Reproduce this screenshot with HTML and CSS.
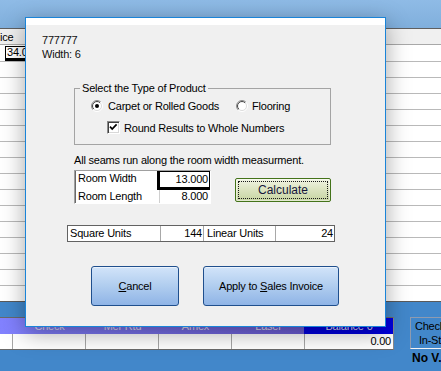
FILE: index.html
```html
<!DOCTYPE html>
<html>
<head>
<meta charset="utf-8">
<link rel="stylesheet" href="styles.css">
</head>
<body>
<div class="app">
  <div class="topbar"></div>
  <div class="grid">
    <div class="grid-head"><span class="hcell">ice</span></div>
    <div class="grid-row"><span class="fcell">34.00</span></div>
    <div class="grid-row"></div>
    <div class="grid-row"></div>
    <div class="grid-row"></div>
    <div class="grid-row"></div>
    <div class="grid-row"></div>
    <div class="grid-row"></div>
    <div class="grid-row"></div>
    <div class="grid-row"></div>
    <div class="grid-row"></div>
    <div class="grid-row"></div>
    <div class="grid-row"></div>
    <div class="grid-row"></div>
    <div class="grid-row"></div>
    <div class="grid-row"></div>
    <div class="grid-row"></div>
  </div>
  <div class="pay">
    <div class="pay-table">
      <div class="pay-head">
        <div class="ph"></div>
        <div class="ph">Check</div>
        <div class="ph">Mer Rtd</div>
        <div class="ph">Amex</div>
        <div class="ph">Laser</div>
        <div class="ph ph-bal">Balance 0</div>
      </div>
      <div class="pay-row">
        <div class="pc"></div>
        <div class="pc"></div>
        <div class="pc"></div>
        <div class="pc"></div>
        <div class="pc"></div>
        <div class="pc pc-last">0.00</div>
      </div>
    </div>
    <div class="side">
      <div class="side-box">Check<br>In-St</div>
      <div class="side-note">No V.</div>
    </div>
  </div>
</div>

<div class="dialog">
  <div class="dlg-title"></div>
  <div class="dlg-body">
    <div class="info">777777<br>Width: 6</div>

    <fieldset class="group">
      <legend class="group-legend">Select the Type of Product</legend>
      <div class="opt-row radios">
        <div class="opt opt-first">
          <svg class="radio" width="12" height="12" viewBox="0 0 12 12">
            <defs>
              <linearGradient id="ro" x1="0" y1="0" x2="1" y2="1"><stop offset="0.5" stop-color="#8a8a8a"/><stop offset="0.5" stop-color="#ffffff"/></linearGradient>
              <linearGradient id="ri" x1="0" y1="0" x2="1" y2="1"><stop offset="0.5" stop-color="#404040"/><stop offset="0.5" stop-color="#dcdcdc"/></linearGradient>
            </defs>
            <circle cx="6" cy="6" r="5.5" fill="none" stroke="url(#ro)"/>
            <circle cx="6" cy="6" r="4.5" fill="#fff" stroke="url(#ri)"/>
            <circle cx="6" cy="6" r="2" fill="#000"/>
          </svg>
          <span class="opt-label">Carpet or Rolled Goods</span>
        </div>
        <div class="opt">
          <svg class="radio" width="12" height="12" viewBox="0 0 12 12">
            <circle cx="6" cy="6" r="5.5" fill="none" stroke="url(#ro)"/>
            <circle cx="6" cy="6" r="4.5" fill="#fff" stroke="url(#ri)"/>
          </svg>
          <span class="opt-label opt-label2">Flooring</span>
        </div>
      </div>
      <div class="opt-row checks">
        <span class="chk">
          <svg width="11" height="11" viewBox="0 0 11 11"><path d="M2 4.6 L4.2 7 L8.6 2.4" fill="none" stroke="#000" stroke-width="1.7"/></svg>
        </span>
        <span class="chk-label">Round Results to Whole Numbers</span>
      </div>
    </fieldset>

    <div class="seams">All seams run along the room width measurment.</div>

    <div class="calc-row">
      <div class="dims">
        <div class="dim-row dim-row1">
          <div class="dim-label">Room Width</div>
          <div class="dim-val dim-focus">13.000</div>
        </div>
        <div class="dim-row dim-row2">
          <div class="dim-label">Room Length</div>
          <div class="dim-val">8.000</div>
        </div>
      </div>
      <div class="calc"><span class="calc-inner">Calculate</span></div>
    </div>

    <div class="results">
      <div class="rc rc1">Square Units</div>
      <div class="rc rc2">144</div>
      <div class="rc rc3">Linear Units</div>
      <div class="rc rc4">24</div>
    </div>

    <div class="actions">
      <div class="btn btn-cancel"><span><u>C</u>ancel</span></div>
      <div class="btn btn-apply"><span>Apply to <u>S</u>ales Invoice</span></div>
    </div>
  </div>
</div>
</body>
</html>
```

FILE: styles.css
```css
* { box-sizing: border-box; }
html, body { margin: 0; padding: 0; }
body {
  width: 441px;
  height: 371px;
  overflow: hidden;
  position: relative;
  font-family: "Liberation Sans", Arial, sans-serif;
  font-size: 11px;
  letter-spacing: -0.2px;
  color: #000;
  background: #4287ca;
}

/* ---------- background application ---------- */
.app { display: flex; flex-direction: column; height: 371px; }
.topbar { height: 28px; background: linear-gradient(#8fbbe6, #80afdc); flex: none; }
.grid { background: #fff; border-top: 1px solid #5f5f5f; flex: none; }
.grid-head {
  height: 16px;
  background: #f0f0f0;
  border-bottom: 1px solid #a8a8a8;
  padding-top: 1px;
  line-height: 15px;
}
.hcell { display: block; padding-left: 0; }
.grid-row { height: 16px; border-bottom: 1px solid #b9b9b9; }
.grid-row:last-child { border-bottom-color: #5a5a5a; }
.fcell {
  display: block;
  width: 70px;
  margin-left: 5px;
  margin-top: 1px;
  height: 15px;
  border-top: 1px solid #000;
  border-left: 1px solid #000;
  border-bottom: 3px solid #000;
  padding-left: 1px;
  line-height: 11px;
  font-size: 11px;
}

.pay { flex: 1; display: flex; align-items: flex-start; padding-top: 15px; }
.pay-table {
  width: 395px;
  margin-left: -1px;
  border: 1px solid #6a6a6a;
  border-right-color: #8a8a8a;
  background: #fff;
  flex: none;
}
.pay-head, .pay-row {
  display: grid;
  grid-template-columns: 13px 73px 73px 73px 73px 88px;
}
.pay-head {
  height: 16px;
  background: linear-gradient(to right, #8282ff 0, #6c5cd4 304px, #0000e0 304px);
}
.ph {
  line-height: 16px;
  text-align: center;
  color: #dcdcf4;
  white-space: nowrap;
  overflow: hidden;
}
.ph-bal { background: #0000e0; }
.pay-row { height: 15px; }
.pc { border-right: 1px solid #a6a6a6; line-height: 15px; }
.pc-last { border-right: 0; text-align: right; padding-right: 2px; }

.side { margin-left: 16px; flex: none; }
.side-box {
  width: 40px;
  height: 32px;
  border: 1px solid #8e9bb0;
  border-bottom-color: #f4f4f4;
  text-align: center;
  line-height: 14px;
  padding-top: 1px;
  color: #000;
  white-space: nowrap;
}
.side-note {
  margin-top: 2px;
  font-weight: bold;
  font-size: 12px;
  line-height: 14px;
  white-space: nowrap;
  padding-left: 2px;
  letter-spacing: 0;
}

/* ---------- dialog window ---------- */
.dialog {
  position: absolute;
  left: 25px;
  top: 17px;
  width: 361px;
  height: 310px;
  border: 1px solid #1a84d8;
  background: #f0f0f0;
  box-shadow: 0 6px 22px rgba(0, 0, 0, 0.35);
  display: flex;
  flex-direction: column;
}
.dlg-title { height: 7px; background: #fff; flex: none; }
.dlg-body { flex: 1; display: flex; flex-direction: column; align-items: flex-start; }

.info { margin: 8px 0 0 16px; line-height: 14px; color: #111; }

.group {
  margin: 20px 0 0 48px;
  width: 257px;
  border: 1px solid #a4a4a4;
  padding: 0 5px 10px 5px;
  min-width: 0;
}
.group-legend { padding: 0 2px; line-height: 14px; }

.opt-row { display: flex; align-items: center; height: 13px; }
.radios { margin-top: 4px; padding-left: 11px; }
.opt { display: flex; align-items: center; }
.opt-first { width: 145px; }
.radio { display: block; flex: none; }
.opt-label { margin-left: 5px; white-space: nowrap; }
.opt-label2 { margin-left: 4px; }

.checks { margin-top: 9px; padding-left: 27px; }
.chk {
  width: 13px;
  height: 13px;
  flex: none;
  background: #fff;
  border: 1px solid;
  border-color: #8a8a8a #fff #fff #8a8a8a;
  box-shadow: inset 1px 1px 0 #404040, inset -1px -1px 0 #d8d8d8;
  display: flex;
}
.chk svg { display: block; margin: 0; }
.chk-label { margin-left: 4px; white-space: nowrap; }

.seams { margin: 8px 0 0 48px; line-height: 14px; white-space: nowrap; }

.calc-row { display: flex; align-items: flex-start; margin: 3px 0 0 48px; }
.dims {
  width: 137px;
  background: #fff;
  border: 1px solid;
  border-color: #a0a0a0 #fff #fff #a0a0a0;
  box-shadow: inset 1px 0 0 #696969;
  padding-left: 1px;
}
.dim-row { display: flex; }
.dim-row1 { height: 19px; }
.dim-row2 { height: 13px; }
.dim-label { width: 81px; padding-left: 2px; white-space: nowrap; }
.dim-row1 .dim-label { line-height: 15px; padding-top: 0; }
.dim-row2 .dim-label { line-height: 13px; }
.dim-val { flex: 1; text-align: right; padding-right: 2px; }
.dim-focus {
  border: 1px solid #000;
  border-left-width: 3px;
  border-bottom-width: 3px;
  line-height: 15px;
  padding-right: 1px;
}
.dim-row2 .dim-val { border-left: 1px solid #cfcfcf; line-height: 13px; margin-left: 2px; }

.calc {
  width: 96px;
  height: 24px;
  margin: 8px 0 0 24px;
  border: 1px solid #44731a;
  border-radius: 2px;
  background: linear-gradient(#f1f4e4, #dde5c2 45%, #c6d4a2);
  box-shadow: inset 0 0 0 1px rgba(255, 255, 255, 0.5);
  padding: 2px;
  display: flex;
}
.calc-inner {
  flex: 1;
  border: 1px dotted #1a1a1a;
  display: flex;
  align-items: center;
  justify-content: center;
  font-size: 12px;
  letter-spacing: 0;
  color: #16163c;
}

.results {
  display: flex;
  margin: 21px 0 0 41px;
  height: 17px;
  border: 1px solid #626262;
  background: #fff;
  line-height: 15px;
}
.rc { white-space: nowrap; }
.rc1 { width: 93px; border-right: 1px solid #a8a8a8; padding-left: 2px; }
.rc2 { width: 43px; border-right: 1px solid #a8a8a8; text-align: right; padding-right: 1px; }
.rc3 { width: 72px; border-right: 1px solid #a8a8a8; padding-left: 3px; }
.rc4 { width: 58px; text-align: right; padding-right: 1px; }

.actions { display: flex; gap: 24px; margin: 24px 0 0 65px; }
.btn {
  height: 40px;
  border: 1px solid #1f4f8d;
  border-radius: 3px;
  background: linear-gradient(#d2e4f9, #b0cdef 50%, #8fb4e6);
  box-shadow: inset 0 1px 0 rgba(255, 255, 255, 0.55);
  display: flex;
  align-items: center;
  justify-content: center;
  color: #000;
}
.btn-cancel { width: 88px; }
.btn-apply { width: 136px; }
.btn u { text-underline-offset: 1px; }
```
